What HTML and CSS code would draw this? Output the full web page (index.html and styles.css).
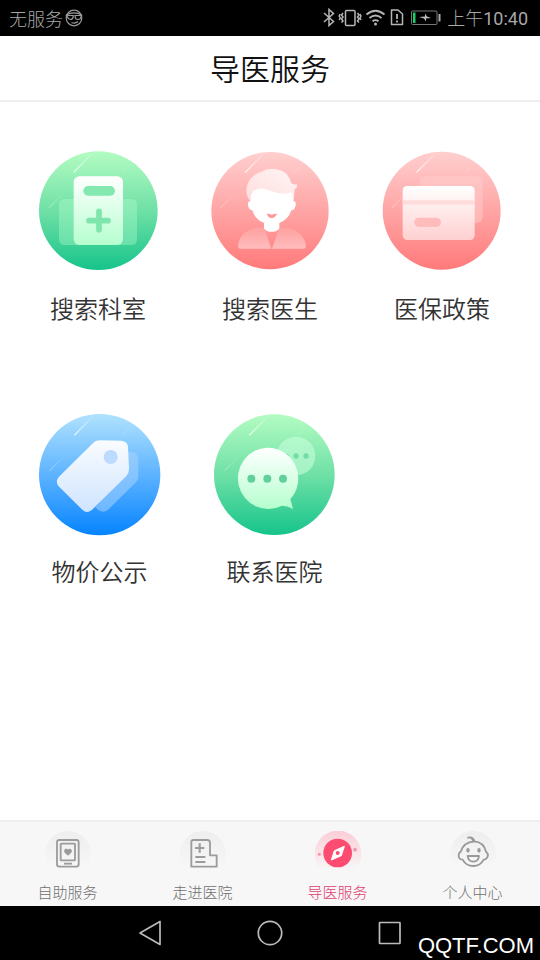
FILE: index.html
```html
<!DOCTYPE html>
<html lang="zh-CN">
<head>
<meta charset="utf-8">
<title>导医服务</title>
<link rel="stylesheet" href="styles.css">
</head>
<body>
<svg class="defs" width="0" height="0" aria-hidden="true">
  <defs>
    <linearGradient id="green" x1="0" y1="0" x2="0" y2="1"><stop offset="0" stop-color="#b3fcc2"/><stop offset=".5" stop-color="#6fe0a6"/><stop offset="1" stop-color="#16c48b"/></linearGradient>
    <linearGradient id="red" x1="0" y1="0" x2="0" y2="1"><stop offset="0" stop-color="#ffcfcf"/><stop offset=".5" stop-color="#ffa5a5"/><stop offset="1" stop-color="#ff7a7a"/></linearGradient>
    <linearGradient id="blue" x1="0" y1="0" x2="0" y2="1"><stop offset="0" stop-color="#b0e2fe"/><stop offset=".5" stop-color="#5db3ff"/><stop offset="1" stop-color="#0684ff"/></linearGradient>
    <linearGradient id="mint" x1="0" y1="0" x2="0" y2="1"><stop offset="0" stop-color="#fff"/><stop offset="1" stop-color="#b5ffce"/></linearGradient>
    <linearGradient id="rose" x1="0" y1="0" x2="0" y2="1"><stop offset="0" stop-color="#fff"/><stop offset="1" stop-color="#ffd0d0"/></linearGradient>
    <linearGradient id="ice" x1="0" y1="0" x2="0" y2="1"><stop offset="0" stop-color="#fafcff"/><stop offset="1" stop-color="#cfe4ff"/></linearGradient>
    <linearGradient id="hair" x1="1" y1="0" x2="0" y2="1"><stop offset="0" stop-color="#fff5f5"/><stop offset="1" stop-color="#ffdcdc"/></linearGradient>
    <linearGradient id="coat" x1="0" y1="0" x2="0" y2="1"><stop offset="0" stop-color="#ffa0a0"/><stop offset="1" stop-color="#ffbcbc"/></linearGradient>
    <linearGradient id="streak" x1="1" y1="0" x2="0" y2="1"><stop offset="0" stop-color="#fff" stop-opacity=".1"/><stop offset="1" stop-color="#fff" stop-opacity=".75"/></linearGradient>
    <linearGradient id="halo" x1="0" y1="0" x2="0" y2="1"><stop offset="0" stop-color="#eee"/><stop offset=".8" stop-color="#f7f7f7"/></linearGradient>
    <linearGradient id="halo-on" x1="0" y1="0" x2="0" y2="1"><stop offset="0" stop-color="#fccdd6"/><stop offset=".84" stop-color="#f7f7f7"/></linearGradient>
    <g id="streaks" fill="none" stroke="url(#streak)" stroke-linecap="round">
      <path d="M132 96L185 42" stroke-width="4"/><path d="M58 202L98 162" stroke-width="3" opacity=".6"/><path d="M278 96L302 72" stroke-width="3" opacity=".35"/>
    </g>
  </defs>
</svg>

<div class="status">
  <span class="carrier">无服务</span>
  <svg class="face" viewBox="0 0 18 18"><g fill="none" stroke="#999" stroke-width="1.2"><circle cx="9" cy="9" r="7.8"/><path d="M.8 6.300Q9 1.500 17.200 6.300M1.500 6.500H8.200V8Q7.500 10.500 5.500 10.500T2.500 8ZM10 6.500H16.500L15.500 9.500Q13 11.500 10.500 9.500ZM6.500 13.500Q10 15 13 12.500"/></g></svg>
  <svg class="signals" viewBox="0 0 120 22">
    <g fill="none" stroke="#b5b5b5" stroke-width="1.500">
      <path d="M1 6L10.500 14.500L6 18.500V2.500L10.500 6.500L1 15"/>
      <rect x="22.500" y="3.500" width="9.500" height="15" rx="1"/>
      <path d="M20 6L18.500 8L20 10L18.500 12L20 14L18.500 15.500M17.200 7L16.200 9L17.200 11L16.200 13M34.500 6L36 8L34.500 10L36 12L34.500 14L36 15.500M37 7L38 9L37 11L38 13" stroke-width="1.500"/>
      <path d="M43.500 7.500Q52.500 0 61.500 7.500M46.500 11Q52.500 6 58.500 11M49.500 14.300Q52.500 12 55.500 14.300" stroke-width="1.800"/>
      <path d="M68.500 3H75L79.500 7V17.500H68.500Z" stroke-linejoin="round"/>
      <path d="M74 7V12M74 13.500V15.500" stroke-width="1.800"/>
      <rect x="88.500" y="4" width="25.500" height="13.500" rx="1" stroke="#777" stroke-width="1"/>
    </g>
    <circle cx="52.500" cy="17" r="1.500" fill="#b5b5b5"/>
    <path d="M90 5.500H92.500V16H90Z" fill="#16cf65"/><path d="M96 10L102 9.500V6.500L104 9.500L108 11L103 11.500V14.500L101 11.500Z" fill="#bbb"/><path d="M115.500 7H117.500V14.500H115.500Z" fill="#aaa"/>
  </svg>
  <span class="time">上午<span class="digits">10:40</span></span>
</div>

<header class="title">导医服务</header>

<main class="services">
  <div class="row">
    <div class="tile">
      <svg viewBox="-6 0 420 420">
        <circle cx="205" cy="212" r="178" fill="url(#green)"/><use href="#streaks"/>
        <rect x="87" y="177" width="234" height="138" rx="16" fill="#b8ffd0" opacity=".36"/>
        <rect x="131" y="109" width="148" height="206" rx="17" fill="url(#mint)"/>
        <rect x="160" y="138" width="95" height="29" rx="14.500" fill="#84e8b1"/>
        <path d="M207 214V269M177 242H234" fill="none" stroke="#7ee6ac" stroke-width="17" stroke-linecap="round"/>
      </svg>
      <span>搜索科室</span>
    </div>
    <div class="tile">
      <svg viewBox="0 0 420 420">
        <circle cx="210" cy="212" r="176" fill="url(#red)"/><use href="#streaks" x="5"/>
        <path d="M121 326Q113 326 114 317Q116 293 134 279Q158 260 192 262L214 326ZM216 326L238 263Q275 260 300 281Q315 295 318 317Q318 326 310 326Z" fill="url(#coat)"/>
        <path d="M192 238H238V265Q231 277 215 275Q199 277 192 265Z" fill="#fff"/>
        <path d="M150 143H280V184Q289 183 287 195Q284 211 274 211Q265 239 238 249Q215 257 193 249Q165 239 157 211Q146 210 144 195Q143 183 151 184Z" fill="#fff"/>
        <path d="M151 184Q134 163 141 138Q150 105 184 95Q211 79 245 92Q266 100 273 128Q281 136 291 133Q292 145 284 148Q283 162 281 184L276 157Q246 166 215 154Q183 139 164 151Q151 156 151 184Z" fill="url(#hair)"/>
        <path d="M202 222Q205 233 215 233T229 222Q215 229 202 222Z" fill="#ff9797" stroke="#ff9797" stroke-width="3" stroke-linejoin="round"/>
      </svg>
      <span>搜索医生</span>
    </div>
    <div class="tile">
      <svg viewBox="6 0 420 420">
        <circle cx="215" cy="212" r="177" fill="url(#red)"/><use href="#streaks" x="9"/>
        <rect x="149" y="109" width="189" height="139" rx="17" fill="#ffcdcd" opacity=".5"/>
        <rect x="98" y="138" width="216" height="162" rx="14" fill="url(#rose)"/>
        <path d="M98 181H314V194H98Z" fill="#ffdcdc"/><rect x="133" y="233" width="80" height="28" rx="14" fill="#ffbcbc"/>
      </svg>
      <span>医保政策</span>
    </div>
  </div>
  <div class="row second">
    <div class="tile">
      <svg viewBox="0 0 420 420">
        <circle cx="209" cy="224" r="182" fill="url(#blue)"/><use href="#streaks" x="2" y="9"/>
        <path d="M292 156H304Q325 158 325 180V231Q325 239 319 245L236 328Q223 341 206 331L196 322L292 220Z" fill="#a7d3ff" opacity=".55"/>
        <path d="M208 121L274 122Q293 124 294 141L297 207Q297 219 289 228L188 328Q172 343 157 329L86 259Q74 244 87 230L187 131Q197 121 208 121Z" fill="url(#ice)"/>
        <circle cx="242" cy="171" r="21" fill="#bedaff"/>
      </svg>
      <span>物价公示</span>
    </div>
    <div class="tile">
      <svg viewBox="0 0 420 420">
        <circle cx="208" cy="224" r="181" fill="url(#green)"/><use href="#streaks" x="2" y="9"/>
        <circle cx="273" cy="168" r="58" fill="#c8ffda" opacity=".58"/>
        <g fill="#75dca8"><circle cx="245" cy="168" r="7"/><circle cx="273" cy="168" r="8"/><circle cx="303" cy="168" r="8"/></g>
        <path d="M187 143A91 92 0 1 0 231 317Q247 317 264 327L256 297A91 92 0 0 0 187 143Z" fill="url(#mint)"/>
        <g fill="#61ce9c"><circle cx="139" cy="236" r="12"/><circle cx="187" cy="236" r="12"/><circle cx="234" cy="236" r="12"/></g>
      </svg>
      <span>联系医院</span>
    </div>
  </div>
</main>

<nav class="tabs">
  <div class="tab">
    <svg viewBox="0 0 144 117"><circle cx="72" cy="69" r="69" fill="url(#halo)"/>
      <g fill="none" stroke="#9c9c9c" stroke-width="5.500"><rect x="39" y="27" width="65" height="80" rx="7"/><rect x="50" y="38" width="43" height="50" rx="2"/><path d="M60 98H84"/></g>
      <path d="M72 73L63 65Q58 56 66 54Q70 54 72 57Q75 53 80 55Q86 59 80 66Z" fill="#999" stroke="#999" stroke-width="2"/></svg>
    <span>自助服务</span>
  </div>
  <div class="tab">
    <svg viewBox="0 0 144 117"><circle cx="72" cy="69" r="69" fill="url(#halo)"/>
      <g fill="none" stroke="#9c9c9c" stroke-width="5.500" stroke-linejoin="round"><path d="M43 27H85Q93 27 93 35V73H113V107H37V33Q37 27 43 27Z"/><path d="M62 37V65M48 51H76M49 78H79M49 93H79" stroke-width="6.500"/></g></svg>
    <span>走进医院</span>
  </div>
  <div class="tab active">
    <svg viewBox="0 0 144 117"><circle cx="72" cy="69" r="70" fill="url(#halo-on)"/><circle cx="71" cy="66" r="43" fill="#fc4c71"/>
      <path d="M91 46L82 74L52 87L61 59Z" fill="#fff" stroke="#fff" stroke-width="3" stroke-linejoin="round"/><circle cx="71" cy="66" r="6" fill="#fc4c71"/><circle cx="16" cy="70" r="4.500" fill="#f892a8"/><circle cx="123" cy="56" r="5.500" fill="#f892a8"/></svg>
    <span>导医服务</span>
  </div>
  <div class="tab">
    <svg viewBox="0 0 144 117"><circle cx="72" cy="69" r="69" fill="url(#halo)"/>
      <g fill="none" stroke="#999" stroke-width="5.500" stroke-linecap="round" stroke-linejoin="round"><path d="M57 20Q72 16 76 31Q104 33 111 62Q121 70 114 80Q110 86 104 86Q94 105 73 105Q51 105 41 86Q28 86 29 72Q29 65 36 61Q43 34 76 31"/><path d="M56 75H90Q88 92 73 92T56 75Z"/></g><path d="M58 19Q74 16 76 31L70 30Q68 23 58 19Z" fill="#999"/><ellipse cx="57" cy="58" rx="5" ry="7" fill="#999"/><ellipse cx="90" cy="58" rx="5" ry="7" fill="#999"/></svg>
    <span>个人中心</span>
  </div>
</nav>

<footer class="navbar">
  <svg viewBox="0 0 264 28"><g fill="none" stroke="#bbb" stroke-width="1.700" stroke-linejoin="round"><path d="M22 2.500V25.500L2 14Z"/><circle cx="132" cy="14" r="11.700"/><rect x="241.500" y="3.500" width="20.500" height="21" rx=".5"/></g></svg>
  <span class="mark">QQTF.COM</span>
</footer>
</body>
</html>
```
FILE: styles.css
```css
* { box-sizing: border-box; }
body {
  margin: 0;
  width: 540px;
  height: 960px;
  display: flex;
  flex-direction: column;
  overflow: hidden;
  background: #fff;
  font-family: "Noto Sans CJK SC", sans-serif;
  font-weight: 350;
}
svg { display: block; flex: none; }
.defs { position: absolute; }
.status {
  height: 36px;
  flex: none;
  display: flex;
  align-items: center;
  padding: 0 12px 0 9px;
  background: #000;
  color: #a8a8a8;
  font-size: 18px;
  font-weight: 300;
  line-height: 36px;
}
.face { width: 18px; height: 18px; margin-left: 2px; }
.signals { width: 120px; height: 22px; margin-left: auto; }
.time { margin-left: 4px; padding-top: 1px; font-family: Roboto, "Noto Sans CJK SC", sans-serif; white-space: nowrap; }
.digits { font-weight: 400; }
.title {
  height: 66px;
  flex: none;
  border-bottom: 2px solid #eee;
  color: #111;
  font-size: 30px;
  line-height: 62px;
  text-align: center;
}
.services { flex: 1; padding-top: 38px; }
.row { display: flex; gap: 32px; height: 260px; padding-left: 28px; }
.second { gap: 35px; padding-left: 30px; }
.tile { width: 140px; text-align: center; color: #333; font-size: 24px; line-height: 36px; }
.tile svg { width: 140px; height: 140px; }
.tile span { display: block; margin-top: 10px; }
.second .tile span { margin: 13px 1px 0 0; }
.tabs {
  height: 86px;
  flex: none;
  display: flex;
  border-top: 2px solid #eee;
  background: #f7f7f7;
}
.tab {
  flex: 1;
  display: flex;
  flex-direction: column;
  align-items: center;
  padding-top: 9px;
  color: #707070;
  font-size: 15px;
  font-weight: 300;
  line-height: 22px;
}
.tab svg { width: 48px; height: 39px; }
.tab span { margin-top: 11px; }
.active { color: #df4070; }
.navbar { position: relative; height: 54px; flex: none; padding: 13px 0 0 138px; background: #000; }
.navbar svg { width: 264px; height: 28px; }
.mark {
  position: absolute;
  right: 6px;
  bottom: 1px;
  color: #fff;
  font: 22px/26px "Liberation Sans", sans-serif;
}
```
